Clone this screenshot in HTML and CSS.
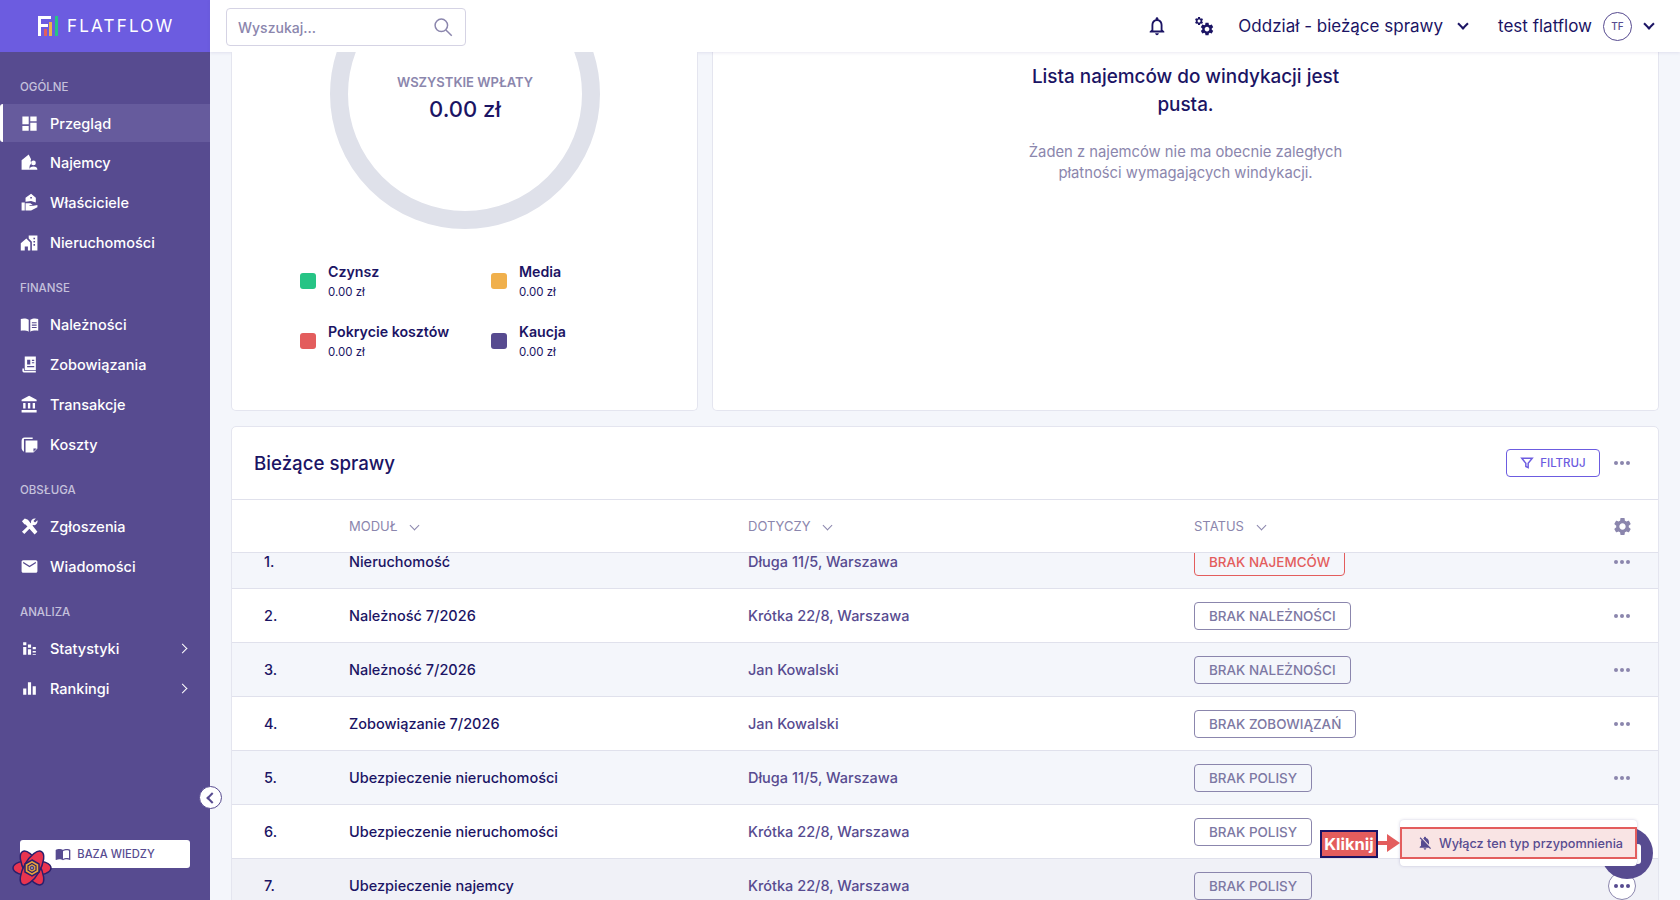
FILE: index.html
```html
<!DOCTYPE html>
<html lang="pl">
<head>
    <meta charset="UTF-8">
    <title>FlatFlow</title>
    <link rel="stylesheet" href="styles.css">
</head>
<body>
<div class="app">
    <aside class="sidebar">
        <div class="brand">
            <svg class="brand-mark" viewBox="0 0 20 20"><path fill="#fff" d="M0 0h13v3H3v5h7v3H3v9H0z"/><rect x="6" y="13" width="3" height="7" fill="#e35d5d"/><rect x="11" y="6" width="3" height="14" fill="#f0b04c"/><rect x="17" y="0" width="3" height="20" fill="#26c485"/></svg>
            <span class="brand-name">FLATFLOW</span>
        </div>
        <nav class="nav">
            <div class="nav-title">OGÓLNE</div>
            <a class="nav-item active"><svg viewBox="0 0 24 24"><path d="M3 13h8V3H3v10zm0 8h8v-6H3v6zm10 0h8V11h-8v10zm0-18v6h8V3h-8z"/></svg>Przegląd</a>
            <a class="nav-item"><svg viewBox="0 0 24 24"><path d="M11 2 2 9v12h10v-3c0-2.500 1.500-4 3-5-1.500-1-2-3-1-5zM17 9.500a3 3 0 1 1 0 6 3 3 0 0 1 0-6zM12 21c0-2.500 2-4 5-4s5 1.500 5 4z"/></svg>Najemcy</a>
            <a class="nav-item"><svg viewBox="0 0 24 24"><path d="M14 1 7 6v5l7-1 6 2V6zM13 5h2v2h-2zM2 12h4v10H2zM7 13h6l3 2h-4v1h5l5-1v3l-8 4H7z"/></svg>Właściciele</a>
            <a class="nav-item"><svg viewBox="0 0 24 24"><path d="M8 7 1 13v9h5v-5h4v5h3V12zM11 3h11v19h-7V11l-4-4zM17 6v2h2V6zm0 4v2h2v-2zm0 4v2h2v-2z"/></svg>Nieruchomości</a>

            <div class="nav-title">FINANSE</div>
            <a class="nav-item"><svg viewBox="0 0 24 24"><path d="M1 5c3-1 7-1 10 1v15c-3-1.500-7-1.500-10-1zM13 6c3-2 7-2 10-1v15c-3-.5-7-.5-10 1zm2 3v1.500h6V9zm0 3v1.500h6V12zm0 3v1.500h6V15z"/></svg>Należności</a>
            <a class="nav-item"><svg viewBox="0 0 24 24"><path d="M6 2h14v17H6zM9 6v6h4V6zm6 0v1.500h3V6zm0 3v1.500h3V9zm-6 5v1.500h9V14zM3 17h2v3h15v2H5c-1.500 0-2-1-2-2z"/></svg>Zobowiązania</a>
            <a class="nav-item"><svg viewBox="0 0 24 24"><path d="M4 10v7h3v-7H4zm6 0v7h3v-7h-3zM2 22h19v-3H2v3zm14-12v7h3v-7h-3zm-4.500-9L2 6v2h19V6l-9.500-5z"/></svg>Transakcje</a>
            <a class="nav-item"><svg viewBox="0 0 24 24"><path d="M7 7h15v10l-5 5H7zM17 17v4l4-4zM5 5v16C3 20 2 18 2 16V8c0-3 1-5 4-5h10v2z"/></svg>Koszty</a>

            <div class="nav-title">OBSŁUGA</div>
            <a class="nav-item"><svg viewBox="0 0 24 24"><path d="M2.500 5.500 6 2l4 1.500L22 18.500 18.500 22 7 9.500 5.500 9zM15 3.500c1.500-1.500 3.500-2 5-1.500l-3 3 2 2 3-3c.5 1.500 0 3.500-1.500 5s-3 1.500-4 1.200L5.500 21.500 2.500 18.500 14 7.500c-.3-1.200 0-3 1-4z"/></svg>Zgłoszenia</a>
            <a class="nav-item"><svg viewBox="0 0 24 24"><path d="M20 4H4c-1.100 0-2 .9-2 2v12c0 1.100.9 2 2 2h16c1.100 0 2-.9 2-2V6c0-1.100-.9-2-2-2zm0 4l-8 5-8-5V6l8 5 8-5v2z"/></svg>Wiadomości</a>

            <div class="nav-title">ANALIZA</div>
            <a class="nav-item"><svg viewBox="0 0 24 24"><path d="M4 4h4v4H4zm0 6h4v10H4zm6-3h4v4h-4zm0 6h4v7h-4zm6-3h4v3h-4zm0 5h4v2h-4zm0 4h4v1h-4z"/></svg>Statystyki<span class="nav-arrow"></span></a>
            <a class="nav-item"><svg viewBox="0 0 24 24"><path d="M4 12h4v8H4zm6-8h4v16h-4zm6 5h4v11h-4z"/></svg>Rankingi<span class="nav-arrow"></span></a>
        </nav>
        <button class="kb-btn"><svg viewBox="0 0 24 24"><path d="M21 5c-1.110-.35-2.330-.5-3.500-.5-1.950 0-4.050.4-5.500 1.500-1.450-1.100-3.550-1.500-5.500-1.500S2.450 4.900 1 6v14.650c0 .25.25.5.5.5.1 0 .15-.05.25-.05C3.100 20.450 5.050 20 6.500 20c1.950 0 4.050.4 5.500 1.500 1.350-.85 3.800-1.500 5.500-1.500 1.650 0 3.350.3 4.750 1.050.1.05.15.05.25.05.25 0 .5-.25.5-.5V6c-.6-.45-1.250-.75-2-1zm0 13.500c-1.100-.35-2.300-.5-3.500-.5-1.700 0-4.150.65-5.500 1.500V8c1.350-.85 3.800-1.500 5.500-1.500 1.200 0 2.400.15 3.500.5v11.500z"/></svg>BAZA WIEDZY</button>
        <svg class="atom" viewBox="0 0 40 40">
            <g fill="#e9344f" stroke="#2a1f6b" stroke-width="1.500">
                <ellipse cx="20" cy="20" rx="19" ry="8"/>
                <ellipse cx="20" cy="20" rx="19" ry="8" transform="rotate(60 20 20)"/>
                <ellipse cx="20" cy="20" rx="19" ry="8" transform="rotate(120 20 20)"/>
            </g>
            <polygon points="20,12 27,16 27,24 20,28 13,24 13,16" fill="#e9a53c" stroke="#2a1f6b" stroke-width="1.500"/>
            <polygon points="20,15.500 24,17.800 24,22.200 20,24.500 16,22.200 16,17.800" fill="#e9a53c" stroke="#2a1f6b" stroke-width="1.200"/>
            <circle cx="20" cy="20" r="1.800" fill="#8b86ad" stroke="#2a1f6b" stroke-width=".8"/>
        </svg>
    </aside>
    <button class="collapse-btn"><span class="collapse-arrow"></span></button>

    <div class="content">
        <header class="topbar">
            <div class="search">
                <span>Wyszukaj...</span>
                <svg viewBox="0 0 24 24"><circle cx="10" cy="10" r="7.500"/><path d="m15.500 15.500 7 7"/></svg>
            </div>
            <div class="topbar-right">
                <svg class="bell" viewBox="0 0 24 24"><path d="M12 22c1.100 0 2-.9 2-2h-4c0 1.100.9 2 2 2zm6-6v-5c0-3.070-1.630-5.640-4.500-6.320V4c0-.83-.67-1.500-1.500-1.500s-1.500.67-1.500 1.500v.68C7.640 5.360 6 7.920 6 11v5l-2 2v1h16v-1l-2-2zm-2 1H8v-6c0-2.480 1.510-4.500 4-4.500s4 2.020 4 4.500v6z"/></svg>
                <svg class="gears" viewBox="0 0 22 22">
                    <path transform="translate(6.100 6.100) scale(.66)" d="M19.140 12.940c.04-.3.06-.61.06-.94 0-.32-.02-.64-.07-.94l2.030-1.580c.18-.14.23-.41.12-.61l-1.920-3.320c-.12-.22-.37-.29-.59-.22l-2.390.96c-.5-.38-1.030-.7-1.620-.94l-.36-2.540c-.04-.24-.24-.41-.48-.41h-3.840c-.24 0-.43.17-.47.41l-.36 2.540c-.59.24-1.130.57-1.620.94l-2.390-.96c-.22-.08-.47 0-.59.22L2.740 8.870c-.12.21-.08.47.12.61l2.030 1.580c-.05.3-.09.63-.09.94s.02.64.07.94l-2.030 1.580c-.18.14-.23.41-.12.61l1.920 3.320c.12.22.37.29.59.22l2.390-.96c.5.38 1.030.7 1.620.94l.36 2.540c.05.24.24.41.48.41h3.840c.24 0 .44-.17.47-.41l.36-2.540c.59-.24 1.130-.56 1.620-.94l2.390.96c.22.08.47 0 .59-.22l1.920-3.320c.12-.22.07-.47-.12-.61l-2.010-1.580zM12 15.600c-1.980 0-3.600-1.620-3.600-3.600s1.620-3.600 3.600-3.600 3.600 1.620 3.600 3.600-1.620 3.600-3.600 3.600z"/>
                    <path transform="translate(1 1) scale(.42)" d="M19.140 12.940c.04-.3.06-.61.06-.94 0-.32-.02-.64-.07-.94l2.030-1.580c.18-.14.23-.41.12-.61l-1.920-3.320c-.12-.22-.37-.29-.59-.22l-2.390.96c-.5-.38-1.030-.7-1.620-.94l-.36-2.540c-.04-.24-.24-.41-.48-.41h-3.840c-.24 0-.43.17-.47.41l-.36 2.540c-.59.24-1.130.57-1.620.94l-2.390-.96c-.22-.08-.47 0-.59.22L2.740 8.870c-.12.21-.08.47.12.61l2.030 1.580c-.05.3-.09.63-.09.94s.02.64.07.94l-2.030 1.580c-.18.14-.23.41-.12.61l1.920 3.320c.12.22.37.29.59.22l2.390-.96c.5.38 1.030.7 1.620.94l.36 2.540c.05.24.24.41.48.41h3.840c.24 0 .44-.17.47-.41l.36-2.540c.59-.24 1.130-.56 1.620-.94l2.390.96c.22.08.47 0 .59-.22l1.920-3.320c.12-.22.07-.47-.12-.61l-2.010-1.580zM12 15.600c-1.980 0-3.600-1.620-3.600-3.600s1.620-3.600 3.600-3.600 3.600 1.620 3.600 3.600-1.620 3.600-3.600 3.600z"/>
                </svg>
                <span class="branch">Oddział - bieżące sprawy</span>
                <span class="chev chev-dark"></span>
                <span class="user">test flatflow</span>
                <span class="avatar">TF</span>
                <span class="chev chev-dark"></span>
            </div>
        </header>

        <main class="main">
            <div class="top-cards">
                <section class="card payments">
                    <div class="donut">
                        <div class="donut-label">WSZYSTKIE WPŁATY</div>
                        <div class="donut-value">0.00 zł</div>
                    </div>
                    <div class="legend">
                        <div class="legend-item"><i class="dot green"></i><div><b>Czynsz</b><small>0.00 zł</small></div></div>
                        <div class="legend-item"><i class="dot orange"></i><div><b>Media</b><small>0.00 zł</small></div></div>
                        <div class="legend-item"><i class="dot red"></i><div><b>Pokrycie kosztów</b><small>0.00 zł</small></div></div>
                        <div class="legend-item"><i class="dot purple"></i><div><b>Kaucja</b><small>0.00 zł</small></div></div>
                    </div>
                </section>
                <section class="card collections">
                    <h3>Lista najemców do windykacji jest pusta.</h3>
                    <p>Żaden z najemców nie ma obecnie zaległych płatności wymagających windykacji.</p>
                </section>
            </div>

            <section class="card cases">
                <div class="cases-head">
                    <h2>Bieżące sprawy</h2>
                    <button class="filter-btn"><svg viewBox="0 0 24 24"><path d="M3 4h18l-7 8.500V20l-4-2v-5.500z"/></svg>FILTRUJ</button>
                    <span class="dots"><i></i><i></i><i></i></span>
                </div>
                <div class="row row-head">
                    <div></div>
                    <div>MODUŁ<span class="chev"></span></div>
                    <div>DOTYCZY<span class="chev"></span></div>
                    <div>STATUS<span class="chev"></span></div>
                    <div class="cell-end"><svg class="gear" viewBox="0 0 24 24"><path d="M19.140 12.940c.04-.3.06-.61.06-.94 0-.32-.02-.64-.07-.94l2.030-1.580c.18-.14.23-.41.12-.61l-1.920-3.320c-.12-.22-.37-.29-.59-.22l-2.390.96c-.5-.38-1.030-.7-1.620-.94l-.36-2.540c-.04-.24-.24-.41-.48-.41h-3.840c-.24 0-.43.17-.47.41l-.36 2.540c-.59.24-1.130.57-1.620.94l-2.390-.96c-.22-.08-.47 0-.59.22L2.740 8.870c-.12.21-.08.47.12.61l2.030 1.580c-.05.3-.09.63-.09.94s.02.64.07.94l-2.030 1.580c-.18.14-.23.41-.12.61l1.920 3.320c.12.22.37.29.59.22l2.390-.96c.5.38 1.030.7 1.620.94l.36 2.540c.05.24.24.41.48.41h3.840c.24 0 .44-.17.47-.41l.36-2.540c.59-.24 1.130-.56 1.620-.94l2.390.96c.22.08.47 0 .59-.22l1.920-3.320c.12-.22.07-.47-.12-.61l-2.010-1.580zM12 15.600c-1.980 0-3.600-1.620-3.600-3.600s1.620-3.600 3.600-3.600 3.600 1.620 3.600 3.600-1.620 3.600-3.600 3.600z"/></svg></div>
                </div>
                <div class="rows">
                    <div class="row row-first"><div>1.</div><div class="strong">Nieruchomość</div><div class="muted">Długa 11/5, Warszawa</div><div><span class="tag tag-red">BRAK NAJEMCÓW</span></div><div class="cell-end"><span class="dots"><i></i><i></i><i></i></span></div></div>
                    <div class="row"><div>2.</div><div class="strong">Należność 7/2026</div><div class="muted">Krótka 22/8, Warszawa</div><div><span class="tag">BRAK NALEŻNOŚCI</span></div><div class="cell-end"><span class="dots"><i></i><i></i><i></i></span></div></div>
                    <div class="row"><div>3.</div><div class="strong">Należność 7/2026</div><div class="muted">Jan Kowalski</div><div><span class="tag">BRAK NALEŻNOŚCI</span></div><div class="cell-end"><span class="dots"><i></i><i></i><i></i></span></div></div>
                    <div class="row"><div>4.</div><div class="strong">Zobowiązanie 7/2026</div><div class="muted">Jan Kowalski</div><div><span class="tag">BRAK ZOBOWIĄZAŃ</span></div><div class="cell-end"><span class="dots"><i></i><i></i><i></i></span></div></div>
                    <div class="row"><div>5.</div><div class="strong">Ubezpieczenie nieruchomości</div><div class="muted">Długa 11/5, Warszawa</div><div><span class="tag">BRAK POLISY</span></div><div class="cell-end"><span class="dots"><i></i><i></i><i></i></span></div></div>
                    <div class="row"><div>6.</div><div class="strong">Ubezpieczenie nieruchomości</div><div class="muted">Krótka 22/8, Warszawa</div><div><span class="tag">BRAK POLISY</span></div><div class="cell-end"></div></div>
                    <div class="row row-hover"><div>7.</div><div class="strong">Ubezpieczenie najemcy</div><div class="muted">Krótka 22/8, Warszawa</div><div><span class="tag">BRAK POLISY</span></div><div class="cell-end"><span class="dots dots-open"><i></i><i></i><i></i></span></div></div>
                </div>
            </section>
        </main>
    </div>
</div>

<!-- tutorial overlay -->
<div class="blob"></div>
<div class="popup"></div>
<div class="popup-item"><svg viewBox="0 0 24 24"><path d="M20 18.690L7.840 6.140 5.270 3.490 4 4.760l2.800 2.800v.01c-.52.99-.8 2.160-.8 3.420v5l-2 2v1h13.730l2 2L21 19.720l-1-1.030zM12 22c1.110 0 2-.89 2-2h-4c0 1.110.89 2 2 2zm6-7.320V11c0-3.080-1.640-5.640-4.500-6.320V4c0-.83-.67-1.500-1.500-1.500s-1.500.67-1.500 1.500v.68c-.15.03-.29.08-.42.12-.1.03-.2.07-.3.11h-.01c-.2.08-.4.17-.59.27-.01 0-.01 0-.02.01L18 14.680z"/></svg>Wyłącz ten typ przypomnienia</div>
<div class="click-label">Kliknij</div>
<div class="click-arrow"></div>
</body>
</html>
```

FILE: styles.css
```css
* {
    margin: 0;
    padding: 0;
    box-sizing: border-box;
}

html, body {
    height: 100%;
    overflow: hidden;
}

body {
    font-family: 'Inter', 'Liberation Sans', sans-serif;
    color: #1b1464;
    background-color: #f4f6fb;
}

.app {
    display: flex;
    height: 900px;
}

/* sidebar */
.sidebar {
    width: 210px;
    flex-shrink: 0;
    display: flex;
    flex-direction: column;
    background-color: #574b90;
    position: relative;
}

.brand {
    height: 52px;
    display: flex;
    align-items: center;
    padding-left: 38px;
    background-color: #6c5ce0;
}

.brand-mark {
    width: 20px;
    height: 20px;
}

.brand-name {
    margin-left: 9px;
    color: #fff;
    font-size: 17px;
    letter-spacing: 2.2px;
}

.nav {
    flex: 1;
    padding-top: 26px;
}

.nav-title {
    height: 18px;
    margin: 0 0 8px 20px;
    color: #c5c1dc;
    font-size: 11.5px;
    font-weight: 500;
    line-height: 18px;
}

.nav-item ~ .nav-title {
    margin-top: 17px;
    margin-bottom: 7px;
}

.nav-item {
    height: 40px;
    display: flex;
    align-items: center;
    padding-left: 20px;
    color: #fff;
    font-size: 14.5px;
    font-weight: 500;
}

.nav-item svg {
    width: 19px;
    height: 19px;
    margin-right: 11px;
    fill: #fff;
}

.nav-item.active {
    height: 38px;
    margin: 2px 0 0;
    background-color: #665b9d;
    border-left: 3px solid #fff;
    border-radius: 3px 0 0 3px;
    padding-left: 17px;
}

.nav-arrow {
    width: 7px;
    height: 7px;
    margin-left: auto;
    margin-right: 24px;
    border-top: 1.5px solid #fff;
    border-right: 1.5px solid #fff;
    transform: rotate(45deg);
}

.kb-btn {
    height: 28px;
    display: flex;
    align-items: center;
    justify-content: center;
    margin: 0 20px 32px;
    border: none;
    border-radius: 3px;
    background-color: #fff;
    color: #574b90;
    font-family: inherit;
    font-size: 11.2px;
    font-weight: 500;
}

.kb-btn svg {
    width: 16px;
    height: 16px;
    margin-right: 6px;
    fill: #574b90;
}

.atom {
    position: absolute;
    left: 12px;
    top: 848px;
    width: 40px;
    height: 40px;
}

.collapse-btn {
    position: absolute;
    left: 199px;
    top: 786px;
    width: 23px;
    height: 23px;
    display: flex;
    align-items: center;
    justify-content: center;
    border: 1.5px solid #574b90;
    border-radius: 50%;
    background-color: #fff;
}

.collapse-arrow {
    width: 8px;
    height: 8px;
    margin-left: 3px;
    border-left: 2.5px solid #574b90;
    border-bottom: 2.5px solid #574b90;
    transform: rotate(45deg);
}

/* topbar */
.content {
    flex: 1;
    min-width: 0;
    display: flex;
    flex-direction: column;
}

.topbar {
    height: 52px;
    flex-shrink: 0;
    display: flex;
    align-items: center;
    padding: 0 27px 0 16px;
    background-color: #fff;
    box-shadow: 0 1px 3px rgba(87, 75, 144, 0.12);
    position: relative;
}

.search {
    width: 240px;
    height: 38px;
    margin-top: 2px;
    display: flex;
    align-items: center;
    justify-content: space-between;
    padding: 0 12px 0 11px;
    border: 1px solid #d5d3e4;
    border-radius: 4px;
    color: #8b86ad;
    font-size: 14px;
    font-weight: 500;
}

.search svg {
    width: 20px;
    height: 20px;
    fill: none;
    stroke: #8b86ad;
    stroke-width: 1.8;
}

.topbar-right {
    margin-left: auto;
    display: flex;
    align-items: center;
    font-size: 17px;
}

.bell {
    width: 22px;
    height: 22px;
    margin-right: 25px;
    fill: #1b1464;
}

.gears {
    width: 22px;
    height: 22px;
    margin-right: 23px;
    fill: #1b1464;
}

.branch {
    margin-right: 16px;
}

.user {
    margin-left: 31px;
    margin-right: 11px;
}

.avatar {
    width: 29px;
    height: 29px;
    display: flex;
    align-items: center;
    justify-content: center;
    margin-right: 13px;
    border: 1px solid #574b90;
    border-radius: 50%;
    color: #574b90;
    font-size: 10px;
    font-weight: 500;
}

.chev {
    width: 7px;
    height: 7px;
    display: inline-block;
    border-right: 1.5px solid #8b86ad;
    border-bottom: 1.5px solid #8b86ad;
    transform: rotate(45deg);
    margin-left: 14px;
    position: relative;
    top: -2px;
}

.chev-dark {
    margin-left: 0;
    width: 8px;
    height: 8px;
    border-color: #1b1464;
    border-width: 2px;
}

/* main area */
.main {
    flex: 1;
    min-height: 0;
    overflow: hidden;
    padding: 0 21px;
}

.card {
    background-color: #fff;
    border: 1px solid #e4e5ef;
    border-radius: 5px;
}

.top-cards {
    height: 359px;
    display: flex;
    gap: 14px;
    margin-bottom: 15px;
}

.payments {
    width: 467px;
    border-top: none;
    border-radius: 0 0 5px 5px;
    position: relative;
    overflow: hidden;
}

.donut {
    position: absolute;
    left: 98px;
    top: -93px;
    width: 270px;
    height: 270px;
    border: 18px solid #dfe1ea;
    border-radius: 50%;
    text-align: center;
    padding-top: 97px;
}

.donut-label {
    color: #8b86ad;
    font-size: 13px;
    font-weight: 600;
}

.donut-value {
    margin-top: 6px;
    font-size: 22px;
    font-weight: 500;
}

.legend {
    position: absolute;
    left: 68px;
    top: 210px;
    display: grid;
    grid-template-columns: 191px 1fr;
    row-gap: 22px;
}

.legend-item {
    display: flex;
    align-items: center;
    height: 38px;
}

.legend-item div {
    padding-top: 2px;
}

.legend-item b {
    display: block;
    font-size: 14.2px;
    font-weight: 600;
    line-height: 20px;
}

.legend-item small {
    display: block;
    font-size: 11.5px;
    line-height: 21px;
}

.dot {
    width: 16px;
    height: 16px;
    margin-right: 12px;
    border-radius: 3px;
}

.green { background-color: #26c485; }
.orange { background-color: #f0b04c; }
.red { background-color: #e35d5d; }
.purple { background-color: #574b90; }

.collections {
    flex: 1;
    border-top: none;
    border-radius: 0 0 5px 5px;
    padding-top: 11px;
    text-align: center;
}

.collections h3 {
    width: 330px;
    margin: 0 auto;
    font-size: 18.9px;
    font-weight: 500;
    line-height: 28px;
}

.collections p {
    width: 350px;
    margin: 23px auto 0;
    color: #8b86ad;
    font-size: 14.8px;
    line-height: 20.5px;
}

/* cases table */
.cases-head {
    height: 72px;
    display: flex;
    align-items: center;
    padding: 0 28px 0 22px;
}

.cases-head h2 {
    font-size: 18.7px;
    font-weight: 500;
    margin-right: auto;
}

.filter-btn {
    width: 94px;
    height: 28px;
    display: flex;
    align-items: center;
    justify-content: center;
    margin-right: 14px;
    border: 1px solid #6c5ce0;
    border-radius: 4px;
    background-color: #fff;
    color: #6c5ce0;
    font-family: inherit;
    font-size: 11.5px;
    font-weight: 500;
}

.filter-btn svg {
    width: 14px;
    height: 14px;
    margin-right: 6px;
    fill: none;
    stroke: #6c5ce0;
    stroke-width: 2.5;
}

.dots {
    display: inline-flex;
    gap: 2px;
}

.dots i {
    width: 4px;
    height: 4px;
    border-radius: 50%;
    background-color: #8b86ad;
}

.dots-open {
    width: 28px;
    height: 28px;
    align-items: center;
    justify-content: center;
    border: 1px solid #8b86ad;
    border-radius: 50%;
    background-color: #fff;
    margin-right: -6px;
}

.dots-open i {
    background-color: #574b90;
}

.row {
    height: 54px;
    display: grid;
    grid-template-columns: 117px 399px 446px 1fr auto;
    align-items: center;
    border-bottom: 1px solid #e0e1ec;
    font-size: 14.5px;
    font-weight: 500;
}

.row > :first-child {
    padding-left: 32px;
}

.row-head {
    border-top: 1px solid #e0e1ec;
    color: #8b86ad;
    font-size: 13px;
    font-weight: 400;
}

.rows {
    overflow: hidden;
}

.rows .row:nth-child(odd) {
    background-color: #f4f6fb;
}

.row-first {
    margin-top: -18px;
}

.rows .row-hover:nth-child(odd) {
    background-color: #f0f1f7;
}

.muted {
    color: #574b90;
}

.cell-end {
    display: flex;
    padding-right: 28px;
}

.gear {
    display: block;
    width: 21px;
    height: 21px;
    margin-right: -3px;
    fill: #8b86ad;
}

.tag {
    display: inline-block;
    padding: 0 14px;
    height: 28px;
    line-height: 26px;
    border: 1px solid #8b86ad;
    border-radius: 4px;
    color: #7d78a3;
    font-size: 13.45px;
    font-weight: 500;
}

.tag-red {
    border-color: #e35d5d;
    color: #e35d5d;
}

/* tutorial overlay */
.blob {
    position: absolute;
    left: 1601px;
    top: 827px;
    width: 52px;
    height: 52px;
    border-radius: 50%;
    background-color: #574b90;
}

.blob::after {
    content: '';
    position: absolute;
    left: 36px;
    top: 17px;
    width: 4px;
    height: 20px;
    border-radius: 0 3px 3px 0;
    background-color: #fff;
}

.popup {
    position: absolute;
    left: 1400px;
    top: 820px;
    width: 237px;
    height: 46px;
    background-color: #fff;
    border-radius: 4px;
    box-shadow: 0 0 3px rgba(87, 75, 144, 0.3);
}

.popup-item {
    position: absolute;
    left: 1400px;
    top: 827px;
    width: 237px;
    height: 32px;
    display: flex;
    align-items: center;
    padding-left: 15px;
    border: 2px solid #e35d5d;
    background-color: #f9e4e4;
    color: #574b90;
    font-size: 12.7px;
    font-weight: 500;
}

.popup-item svg {
    width: 16px;
    height: 16px;
    margin-right: 6px;
    fill: #574b90;
}

.click-label {
    position: absolute;
    left: 1320px;
    top: 830px;
    width: 58px;
    height: 28px;
    border: 2px solid #1b1464;
    background-color: #e35d5d;
    color: #fff;
    font-size: 16.5px;
    font-weight: 700;
    line-height: 24px;
    text-align: center;
}

.click-arrow {
    position: absolute;
    left: 1378px;
    top: 841px;
    width: 16px;
    height: 4px;
    background-color: #e35d5d;
}

.click-arrow::after {
    content: '';
    position: absolute;
    left: 9px;
    top: -7px;
    border-left: 13px solid #e35d5d;
    border-top: 9px solid transparent;
    border-bottom: 9px solid transparent;
}
```
